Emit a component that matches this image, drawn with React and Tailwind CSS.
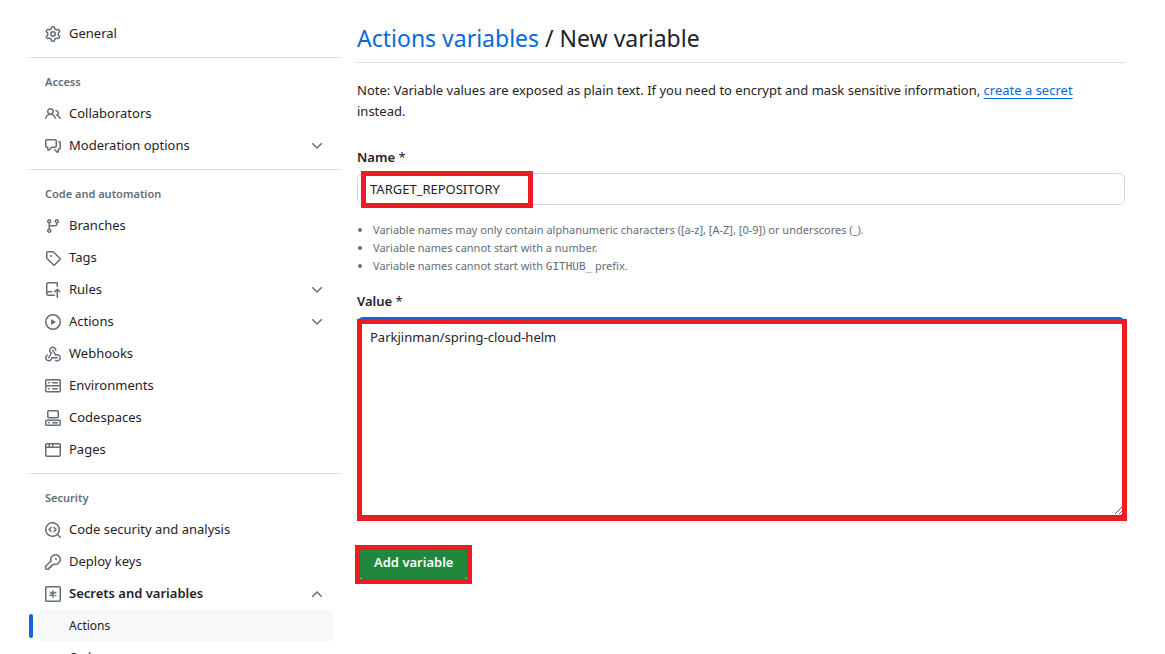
import React, { useState } from 'react';

const icons = {
  gear: 'M8 0a8.2 8.2 0 0 1 .701.031C9.444.095 9.99.645 10.16 1.29l.288 1.107c.018.066.079.158.212.224.231.114.454.243.668.386.123.082.233.09.299.071l1.103-.303c.644-.176 1.392.021 1.82.63.27.385.506.792.704 1.218.315.675.111 1.422-.364 1.891l-.814.806c-.049.048-.098.147-.088.294.016.257.016.515 0 .772-.01.147.038.246.088.294l.814.806c.475.469.679 1.216.364 1.891a7.977 7.977 0 0 1-.704 1.217c-.428.61-1.176.807-1.82.63l-1.102-.302c-.067-.019-.177-.011-.3.071a5.909 5.909 0 0 1-.668.386c-.133.066-.194.158-.211.224l-.29 1.106c-.168.646-.715 1.196-1.458 1.26a8.006 8.006 0 0 1-1.402 0c-.743-.064-1.289-.614-1.458-1.26l-.289-1.106c-.018-.066-.079-.158-.212-.224a5.738 5.738 0 0 1-.668-.386c-.123-.082-.233-.09-.299-.071l-1.103.303c-.644.176-1.392-.021-1.82-.63a8.12 8.12 0 0 1-.704-1.218c-.315-.675-.111-1.422.363-1.891l.815-.806c.05-.048.098-.147.088-.294a6.214 6.214 0 0 1 0-.772c.01-.147-.038-.246-.088-.294l-.815-.806C.635 6.045.431 5.298.746 4.623a7.92 7.92 0 0 1 .704-1.217c.428-.61 1.176-.807 1.82-.63l1.102.302c.067.019.177.011.3-.071.214-.143.437-.272.668-.386.133-.066.194-.158.211-.224l.29-1.106C6.009.645 6.556.095 7.299.03 7.53.01 7.764 0 8 0Zm-.571 1.525c-.036.003-.108.036-.137.146l-.289 1.105c-.147.561-.549.967-.998 1.189-.173.086-.34.183-.5.29-.417.278-.97.423-1.529.27l-1.103-.303c-.109-.03-.175.016-.195.045-.22.312-.412.644-.573.99-.014.031-.021.11.059.19l.815.806c.411.406.562.957.53 1.456a4.709 4.709 0 0 0 0 .582c.032.499-.119 1.05-.53 1.456l-.815.806c-.081.08-.073.159-.059.19.162.346.353.677.573.989.02.03.085.076.195.046l1.102-.303c.56-.153 1.113-.008 1.53.27.161.107.328.204.501.29.447.222.85.629.997 1.189l.289 1.105c.029.109.101.143.137.146a6.6 6.6 0 0 0 1.142 0c.036-.003.108-.036.137-.146l.289-1.105c.147-.561.549-.967.998-1.189.173-.086.34-.183.5-.29.417-.278.97-.423 1.529-.27l1.103.303c.109.029.175-.016.195-.045.22-.313.411-.644.573-.99.014-.031.021-.11-.059-.19l-.815-.806c-.411-.406-.562-.957-.53-1.456a4.709 4.709 0 0 0 0-.582c-.032-.499.119-1.05.53-1.456l.815-.806c.081-.08.073-.159.059-.19a6.464 6.464 0 0 0-.573-.989c-.02-.03-.085-.076-.195-.046l-1.102.303c-.56.153-1.113.008-1.53-.27a4.44 4.44 0 0 0-.501-.29c-.447-.222-.85-.629-.997-1.189l-.289-1.105c-.029-.11-.101-.143-.137-.146a6.6 6.6 0 0 0-1.142 0ZM11 8a3 3 0 1 1-6 0 3 3 0 0 1 6 0ZM9.5 8a1.5 1.5 0 1 0-3.001.001A1.5 1.5 0 0 0 9.5 8Z',
  people: 'M2 5.5a3.5 3.5 0 1 1 5.898 2.549 5.508 5.508 0 0 1 3.034 4.084.75.75 0 1 1-1.482.235 4 4 0 0 0-7.9 0 .75.75 0 0 1-1.482-.236A5.507 5.507 0 0 1 3.102 8.05 3.493 3.493 0 0 1 2 5.5ZM11 4a3.001 3.001 0 0 1 2.22 5.018 5.01 5.01 0 0 1 2.56 3.012.749.749 0 0 1-.885.954.752.752 0 0 1-.549-.514 3.507 3.507 0 0 0-2.522-2.372.75.75 0 0 1-.574-.73v-.352a.75.75 0 0 1 .416-.672A1.5 1.5 0 0 0 11 5.5.75.75 0 0 1 11 4Zm-5.5-.5a2 2 0 1 0-.001 3.999A2 2 0 0 0 5.5 3.5Z',
  discussion: 'M1.75 1h8.5c.966 0 1.75.784 1.75 1.75v5.5A1.75 1.75 0 0 1 10.25 10H7.061l-2.574 2.573A1.458 1.458 0 0 1 2 11.543V10h-.25A1.75 1.75 0 0 1 0 8.25v-5.5C0 1.784.784 1 1.75 1ZM1.5 2.75v5.5c0 .138.112.25.25.25h1a.75.75 0 0 1 .75.75v2.19l2.72-2.72a.749.749 0 0 1 .53-.22h3.5a.25.25 0 0 0 .25-.25v-5.5a.25.25 0 0 0-.25-.25h-8.5a.25.25 0 0 0-.25.25Zm13 2a.25.25 0 0 0-.25-.25h-.5a.75.75 0 0 1 0-1.5h.5c.966 0 1.75.784 1.75 1.75v5.5A1.75 1.75 0 0 1 14.25 12H14v1.543a1.458 1.458 0 0 1-2.487 1.03L9.22 12.28a.749.749 0 0 1 .326-1.275.749.749 0 0 1 .734.215l2.22 2.22v-2.19a.75.75 0 0 1 .75-.75h1a.25.25 0 0 0 .25-.25Z',
  branch: 'M9.5 3.25a2.25 2.25 0 1 1 3 2.122V6A2.5 2.5 0 0 1 10 8.5H6a1 1 0 0 0-1 1v1.128a2.251 2.251 0 1 1-1.5 0V5.372a2.25 2.25 0 1 1 1.5 0v1.836A2.493 2.493 0 0 1 6 7h4a1 1 0 0 0 1-1v-.628A2.25 2.25 0 0 1 9.5 3.25Zm-6 0a.75.75 0 1 0 1.5 0 .75.75 0 0 0-1.5 0Zm8.25-.75a.75.75 0 1 0 0 1.5.75.75 0 0 0 0-1.5ZM4.25 12a.75.75 0 1 0 0 1.5.75.75 0 0 0 0-1.5Z',
  tag: 'M1 7.775V2.75C1 1.784 1.784 1 2.75 1h5.025c.464 0 .91.184 1.238.513l6.25 6.25a1.75 1.75 0 0 1 0 2.474l-5.026 5.026a1.75 1.75 0 0 1-2.474 0l-6.25-6.25A1.752 1.752 0 0 1 1 7.775Zm1.5 0c0 .066.026.13.073.177l6.25 6.25a.25.25 0 0 0 .354 0l5.025-5.025a.25.25 0 0 0 0-.354l-6.25-6.25a.25.25 0 0 0-.177-.073H2.75a.25.25 0 0 0-.25.25ZM6 5a1 1 0 1 1 0 2 1 1 0 0 1 0-2Z',
  rules: 'M1 2.5A2.5 2.5 0 0 1 3.5 0h8.75a.75.75 0 0 1 .75.75v3.5a.75.75 0 0 1-1.5 0V1.5h-8a1 1 0 0 0-1 1v6.708A2.493 2.493 0 0 1 3.5 9h3.25a.75.75 0 0 1 0 1.5H3.5a1 1 0 0 0 0 2h5.75a.75.75 0 0 1 0 1.5H3.5A2.5 2.5 0 0 1 1 11.5Zm13.23 7.79-.001-.001-1.224-1.224v6.184a.75.75 0 0 1-1.5 0V9.066L10.28 10.29a.75.75 0 0 1-1.06-1.061l2.505-2.504a.75.75 0 0 1 1.06 0L15.29 9.23a.751.751 0 0 1-.018 1.042.751.751 0 0 1-1.042.018Z',
  play: 'M8 0a8 8 0 1 1 0 16A8 8 0 0 1 8 0ZM1.5 8a6.5 6.5 0 1 0 13 0 6.5 6.5 0 0 0-13 0Zm4.879-2.773 4.264 2.559a.25.25 0 0 1 0 .428l-4.264 2.559A.25.25 0 0 1 6 10.559V5.442a.25.25 0 0 1 .379-.215Z',
  webhook: 'M5.5 4.25a2.25 2.25 0 0 1 4.5 0 .75.75 0 0 0 1.5 0 3.75 3.75 0 1 0-6.14 2.889l-2.272 4.258a.75.75 0 0 0 1.324.706L7 7.25a.75.75 0 0 0-.309-1.015A2.25 2.25 0 0 1 5.5 4.25Z M7.364 3.607a.75.75 0 0 1 1.03.257l2.608 4.349a3.75 3.75 0 1 1-.628 6.785.75.75 0 0 1 .752-1.299 2.25 2.25 0 1 0-.033-3.88.75.75 0 0 1-1.03-.256L7.107 4.636a.75.75 0 0 1 .257-1.03Z M2.9 8.776A.75.75 0 0 1 2.625 9.8 2.25 2.25 0 1 0 6 11.75a.75.75 0 0 1 .75-.751h5.5a.75.75 0 0 1 0 1.5H7.425a3.751 3.751 0 1 1-5.55-3.998.75.75 0 0 1 1.024.274Z',
  server: 'M1.75 1h12.5c.966 0 1.75.784 1.75 1.75v4c0 .372-.116.717-.314 1 .198.283.314.628.314 1v4a1.75 1.75 0 0 1-1.75 1.75H1.75A1.75 1.75 0 0 1 0 12.75v-4c0-.358.109-.707.314-1a1.739 1.739 0 0 1-.314-1v-4C0 1.784.784 1 1.75 1ZM1.5 2.75v4c0 .138.112.25.25.25h12.5a.25.25 0 0 0 .25-.25v-4a.25.25 0 0 0-.25-.25H1.75a.25.25 0 0 0-.25.25Zm.25 5.75a.25.25 0 0 0-.25.25v4c0 .138.112.25.25.25h12.5a.25.25 0 0 0 .25-.25v-4a.25.25 0 0 0-.25-.25ZM7 4.75A.75.75 0 0 1 7.75 4h4.5a.75.75 0 0 1 0 1.5h-4.5A.75.75 0 0 1 7 4.75ZM7.75 10h4.5a.75.75 0 0 1 0 1.5h-4.5a.75.75 0 0 1 0-1.5ZM3 4.75A.75.75 0 0 1 3.75 4h.5a.75.75 0 0 1 0 1.5h-.5A.75.75 0 0 1 3 4.75ZM3.75 10h.5a.75.75 0 0 1 0 1.5h-.5a.75.75 0 0 1 0-1.5Z',
  codespaces: 'M0 11.25c0-.966.784-1.75 1.75-1.75h12.5c.966 0 1.75.784 1.75 1.75v3A1.75 1.75 0 0 1 14.25 16H1.75A1.75 1.75 0 0 1 0 14.25Zm2-9.5C2 .784 2.784 0 3.75 0h8.5C13.216 0 14 .784 14 1.75v5a1.75 1.75 0 0 1-1.75 1.75h-8.5A1.75 1.75 0 0 1 2 6.75Zm1.75-.25a.25.25 0 0 0-.25.25v5c0 .138.112.25.25.25h8.5a.25.25 0 0 0 .25-.25v-5a.25.25 0 0 0-.25-.25Zm-2 9.5a.25.25 0 0 0-.25.25v3c0 .138.112.25.25.25h12.5a.25.25 0 0 0 .25-.25v-3a.25.25 0 0 0-.25-.25Z M7 12.75a.75.75 0 0 1 .75-.75h4.5a.75.75 0 0 1 0 1.5h-4.5a.75.75 0 0 1-.75-.75Zm-4 0a.75.75 0 0 1 .75-.75h.5a.75.75 0 0 1 0 1.5h-.5a.75.75 0 0 1-.75-.75Z',
  browser: 'M0 2.75C0 1.784.784 1 1.75 1h12.5c.966 0 1.75.784 1.75 1.75v10.5A1.75 1.75 0 0 1 14.25 15H1.75A1.75 1.75 0 0 1 0 13.25ZM14.5 6h-13v7.25c0 .138.112.25.25.25h12.5a.25.25 0 0 0 .25-.25Zm-6-3.5v2h6V2.75a.25.25 0 0 0-.25-.25ZM5 2.5v2h2v-2Zm-3.25 0a.25.25 0 0 0-.25.25V4.5h2v-2Z',
  codescan: 'M8.47 4.97a.75.75 0 0 0 0 1.06L9.94 7.5 8.47 8.97a.75.75 0 1 0 1.06 1.06l2-2a.75.75 0 0 0 0-1.06l-2-2a.75.75 0 0 0-1.06 0ZM6.53 6.03a.75.75 0 0 0-1.06-1.06l-2 2a.75.75 0 0 0 0 1.06l2 2a.75.75 0 1 0 1.06-1.06L5.06 7.5l1.47-1.47Z M12.246 13.307a7.501 7.501 0 1 1 1.06-1.06l2.474 2.473a.749.749 0 0 1-.326 1.275.749.749 0 0 1-.734-.215ZM1.5 7.5a6.002 6.002 0 0 0 3.608 5.504 6.002 6.002 0 0 0 6.486-1.117.748.748 0 0 1 .292-.293A6 6 0 1 0 1.5 7.5Z',
  key: 'M10.5 0a5.499 5.499 0 1 1-1.288 10.848l-.932.932a.749.749 0 0 1-.53.22H7v.75a.749.749 0 0 1-.22.53l-.5.5a.749.749 0 0 1-.53.22H5v.75a.749.749 0 0 1-.22.53l-.5.5a.749.749 0 0 1-.53.22h-2A1.75 1.75 0 0 1 0 14.25v-2c0-.199.079-.389.22-.53l4.932-4.932A5.5 5.5 0 0 1 10.5 0Zm-4 5.5c-.001.431.069.86.205 1.269a.75.75 0 0 1-.181.768L1.5 12.56v1.69c0 .138.112.25.25.25h1.69l.06-.06v-1.19a.75.75 0 0 1 .75-.75h1.19l.06-.06v-1.19a.75.75 0 0 1 .75-.75h1.19l1.023-1.025a.75.75 0 0 1 .768-.18A4 4 0 1 0 6.5 5.5ZM11 6a1 1 0 1 1 0-2 1 1 0 0 1 0 2Z',
  chevron: 'M12.78 5.22a.749.749 0 0 1 0 1.06l-4.25 4.25a.749.749 0 0 1-1.06 0L3.22 6.28a.749.749 0 1 1 1.06-1.06L8 8.939l3.72-3.719a.749.749 0 0 1 1.06 0Z',
};

const sections = [
  { items: [{ icon: 'gear', label: 'General' }] },
  {
    title: 'Access',
    items: [
      { icon: 'people', label: 'Collaborators' },
      { icon: 'discussion', label: 'Moderation options', expandable: true },
    ],
  },
  {
    title: 'Code and automation',
    items: [
      { icon: 'branch', label: 'Branches' },
      { icon: 'tag', label: 'Tags' },
      { icon: 'rules', label: 'Rules', expandable: true },
      { icon: 'play', label: 'Actions', expandable: true },
      { icon: 'webhook', label: 'Webhooks' },
      { icon: 'server', label: 'Environments' },
      { icon: 'codespaces', label: 'Codespaces' },
      { icon: 'browser', label: 'Pages' },
    ],
  },
  {
    title: 'Security',
    items: [
      { icon: 'codescan', label: 'Code security and analysis' },
      { icon: 'key', label: 'Deploy keys' },
      { icon: 'asterisk', label: 'Secrets and variables', expandable: true, children: ['Actions', 'Codespaces'] },
    ],
  },
];

const Icon = ({ name, className = '' }) => (
  <svg viewBox="0 0 16 16" className={`size-4 shrink-0 fill-[#656d76] ${className}`} aria-hidden="true">
    {name === 'asterisk' ? (
      <g fill="none" stroke="#656d76" strokeWidth="1.5" strokeLinecap="round">
        <rect x="0.75" y="0.75" width="14.5" height="14.5" rx="1" />
        <path d="M8 4.75v6.5M5.2 6.4l5.6 3.2M10.8 6.4 5.2 9.6" />
      </g>
    ) : (
      <path d={icons[name]} />
    )}
  </svg>
);

const rowClass = 'flex w-full h-8 items-center gap-2 rounded-md px-2 text-[13px] text-left hover:bg-[#f6f8fa]';

const NavItem = ({ item }) => {
  const [open, setOpen] = useState(Boolean(item.children));

  if (!item.expandable) {
    return (
      <li>
        <a href="#" className={rowClass}>
          <Icon name={item.icon} />
          {item.label}
        </a>
      </li>
    );
  }

  return (
    <li>
      <button
        type="button"
        aria-expanded={open}
        onClick={() => setOpen(!open)}
        className={`${rowClass} ${item.children ? 'font-semibold' : ''}`}
      >
        <Icon name={item.icon} />
        <span className="grow">{item.label}</span>
        <Icon name="chevron" className={open ? 'rotate-180' : ''} />
      </button>
      {open && item.children && (
        <ul>
          {item.children.map((child, idx) => (
            <li key={child} className="relative">
              {idx === 0 && <span className="absolute -left-2 top-1 h-6 w-1 rounded-md bg-[#0969da]" />}
              <a href="#" className={`flex h-8 items-center rounded-md pl-8 text-xs ${idx === 0 ? 'bg-[#f6f8fa]' : ''}`}>{child}</a>
            </li>
          ))}
        </ul>
      )}
    </li>
  );
};

const Sidebar = () => (
  <nav aria-label="Settings" className="w-[312px] shrink-0">
    {sections.map((section, idx) => (
      <div key={idx} className={idx ? 'mt-[7px] border-t border-[#dfe2e5] pt-2' : ''}>
        {section.title && (
          <h2 className="flex h-8 items-center px-4 text-[11px] font-semibold text-[#656d76]">{section.title}</h2>
        )}
        <ul className="px-2">
          {section.items.map((item) => <NavItem key={item.label} item={item} />)}
        </ul>
      </div>
    ))}
  </nav>
);

// Red box drawn over a field to point it out
const Marker = ({ className }) => (
  <span className={`pointer-events-none absolute border-[5px] border-[#ed1c24] ${className}`} />
);

const App = () => {
  const [name, setName] = useState('TARGET_REPOSITORY');
  const [value, setValue] = useState('Parkjinman/spring-cloud-helm');

  return (
    <div className="flex gap-4 bg-white pl-[29px] pr-10 pt-[18px] font-['Noto_Sans',sans-serif] text-[#1f2328]">
      <Sidebar />

      <main className="min-w-0 grow">
        <h1 className="border-b border-[#d8dee4] pt-1 pb-2 text-[23px] leading-8">
          <a href="#" className="text-[#0969da]">Actions variables</a> / New variable
        </h1>

        <p className="mt-[17px] pr-4 text-[13px] leading-[21px]">
          Note: Variable values are exposed as plain text. If you need to encrypt and mask sensitive information,{' '}
          <a href="#" className="text-[#0969da] underline underline-offset-3">create a secret</a> instead.
        </p>

        <form onSubmit={(e) => e.preventDefault()}>
          <label htmlFor="name" className="mt-[25px] block text-[13px] leading-[21px] font-semibold">
            Name <span className="font-normal">*</span>
          </label>
          <div className="relative mt-[5px]">
            <input
              id="name"
              value={name}
              onChange={(e) => setName(e.target.value)}
              className="block h-8 w-full rounded-md border border-[#d0d7de] px-3 text-[13px] outline-none"
            />
            <Marker className="-top-0.5 left-1 h-[37px] w-[172px]" />
          </div>

          <ul className="mt-4 list-disc pl-4 text-[11px] leading-[18px] text-[#656d76]">
            <li>Variable names may only contain alphanumeric characters ([a-z], [A-Z], [0-9]) or underscores (_).</li>
            <li>Variable names cannot start with a number.</li>
            <li>Variable names cannot start with <code className="font-['DejaVu_Sans_Mono',monospace] text-[11px]">GITHUB_</code> prefix.</li>
          </ul>

          <label htmlFor="value" className="mt-[15px] block text-[13px] leading-[21px] font-semibold">
            Value <span className="font-normal">*</span>
          </label>
          <div className="relative mt-[5px]">
            <textarea
              id="value"
              value={value}
              onChange={(e) => setValue(e.target.value)}
              className="block h-[200px] w-full resize rounded-md border-2 border-[#0969da] px-[11px] py-2 text-[13px] leading-[21px] outline-none"
            />
            <Marker className="top-0.5 left-0 -right-0.5 h-[202px]" />
          </div>

          <div className="relative mt-[30px] w-fit">
            <button type="submit" className="block h-8 rounded-md bg-[#1f883d] px-[17px] text-[13px] font-semibold text-white">Add variable</button>
            <Marker className="-top-0.5 -left-0.5 -right-0.5 h-[39px]" />
          </div>
        </form>
      </main>
    </div>
  );
};

export default App;
